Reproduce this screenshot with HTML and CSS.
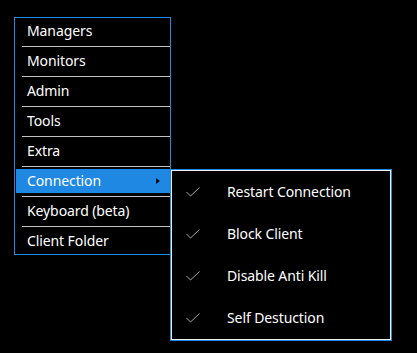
FILE: index.html
```html
<!DOCTYPE html>
<html>
<head>
<meta charset="utf-8">
<link rel="stylesheet" href="styles.css">
</head>
<body>
<div class="stage">
  <ul class="menu">
    <li class="item">Managers</li>
    <li class="sep"></li>
    <li class="item">Monitors</li>
    <li class="sep"></li>
    <li class="item">Admin</li>
    <li class="sep"></li>
    <li class="item">Tools</li>
    <li class="sep"></li>
    <li class="item">Extra</li>
    <li class="sep"></li>
    <li class="item active">Connection<span class="arrow"></span>
      <ul class="submenu">
        <li class="subitem"><svg class="check" width="14" height="10" viewBox="0 0 14 10"><path d="M0.5 5 L4.5 9 L13.5 0.5" fill="none" stroke="#a8a8a8" stroke-width="1"/></svg><span>Restart Connection</span></li>
        <li class="subitem"><svg class="check" width="14" height="10" viewBox="0 0 14 10"><path d="M0.5 5 L4.5 9 L13.5 0.5" fill="none" stroke="#a8a8a8" stroke-width="1"/></svg><span>Block Client</span></li>
        <li class="subitem"><svg class="check" width="14" height="10" viewBox="0 0 14 10"><path d="M0.5 5 L4.5 9 L13.5 0.5" fill="none" stroke="#a8a8a8" stroke-width="1"/></svg><span>Disable Anti Kill</span></li>
        <li class="subitem"><svg class="check" width="14" height="10" viewBox="0 0 14 10"><path d="M0.5 5 L4.5 9 L13.5 0.5" fill="none" stroke="#a8a8a8" stroke-width="1"/></svg><span>Self Destuction</span></li>
      </ul>
    </li>
    <li class="sep"></li>
    <li class="item">Keyboard (beta)</li>
    <li class="sep"></li>
    <li class="item">Client Folder</li>
  </ul>
</div>
</body>
</html>
```

FILE: styles.css
```css
html, body {
  margin: 0;
  padding: 0;
  background: #000;
}
body {
  width: 417px;
  height: 353px;
  overflow: hidden;
  font-family: "Noto Sans", "Open Sans", sans-serif;
  font-size: 14px;
  letter-spacing: -0.1px;
  color: #fff;
}
.stage {
  padding: 17px 0 0 14px;
}
ul {
  list-style: none;
  margin: 0;
  padding: 0;
}
.menu {
  border: 1px solid #1e8ae6;
  padding: 1px 0 1px 1px;
  box-sizing: content-box;
  width: 154px;
}
.item {
  height: 24px;
  line-height: 24px;
  padding-left: 11px;
  position: relative;
  white-space: nowrap;
}
.item.active {
  background: #1e88e3;
}
.arrow {
  position: absolute;
  left: 140px;
  top: 9px;
  width: 0;
  height: 0;
  border-top: 3px solid transparent;
  border-bottom: 3px solid transparent;
  border-left: 4px solid #0a1420;
}
.sep {
  height: 1px;
  background: #c4c4c4;
  margin: 3px 0 2px 6px;
}
.submenu {
  position: absolute;
  top: 0;
  left: 100%;
  border: 1px solid #1e8ae6;
  box-shadow: inset 0 0 0 1px #f0f0f0;
  padding: 1px;
  width: 218px;
  background: #000;
}
.subitem {
  height: 42px;
  display: flex;
  align-items: center;
  padding-left: 14px;
}
.check {
  display: block;
  flex: none;
}
.subitem span {
  margin-left: 27px;
  line-height: 20px;
}
```
